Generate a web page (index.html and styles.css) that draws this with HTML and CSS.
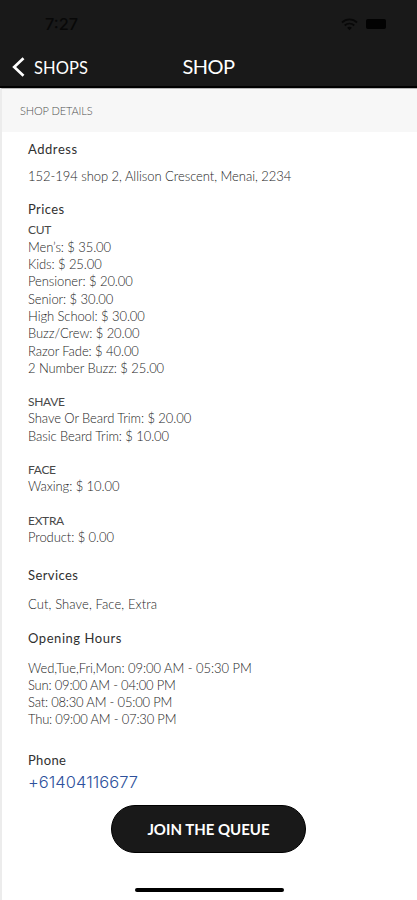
FILE: index.html
```html
<!DOCTYPE html>
<html lang="en">
<head>
<meta charset="utf-8">
<title>Shop</title>
<link rel="stylesheet" href="styles.css">
</head>
<body>
<div class="screen">
  <header class="top">
    <div class="status">
      <span class="time">7:27</span>
      <svg class="wifi" width="17" height="13" viewBox="0 0 17 13" fill="none" stroke="#080808" stroke-width="1.800"><path d="M1 4.500C5.200.3 11.800.3 16 4.500M3.700 7.500c2.800-2.600 6.800-2.600 9.600 0"/><path d="M8.500 12.300 6 9.700q2.500-2 5 0z" fill="#080808" stroke="none"/></svg>
      <span class="battery"></span>
    </div>
    <nav class="nav">
      <a class="back"><svg width="13" height="20" viewBox="0 0 13 20" fill="none" stroke="#fff" stroke-width="2.700"><path d="M11.500 1.200 2.200 10l9.300 8.800"/></svg><span>SHOPS</span></a>
      <h1>SHOP</h1>
    </nav>
  </header>
  <div class="section"><span>SHOP DETAILS</span></div>
  <div class="content">
    <main>
      <h2>Address</h2>
      <p class="address">152-194 shop 2, Allison Crescent, Menai, 2234</p>
      <h2 class="prices">Prices</h2>
      <div class="group">
        <h3>CUT</h3>
        <p>Men’s: $ 35.00</p>
        <p>Kids: $ 25.00</p>
        <p>Pensioner: $ 20.00</p>
        <p>Senior: $ 30.00</p>
        <p>High School: $ 30.00</p>
        <p>Buzz/Crew: $ 20.00</p>
        <p>Razor Fade: $ 40.00</p>
        <p>2 Number Buzz: $ 25.00</p>
      </div>
      <div class="group">
        <h3>SHAVE</h3>
        <p>Shave Or Beard Trim: $ 20.00</p>
        <p>Basic Beard Trim: $ 10.00</p>
      </div>
      <div class="group">
        <h3>FACE</h3>
        <p>Waxing: $ 10.00</p>
      </div>
      <div class="group">
        <h3>EXTRA</h3>
        <p>Product: $ 0.00</p>
      </div>
      <h2 class="services">Services</h2>
      <p class="list">Cut, Shave, Face, Extra</p>
      <h2 class="opening">Opening Hours</h2>
      <div class="hours">
        <p class="days">Wed,Tue,Fri,Mon: 09:00 AM - 05:30 PM</p>
        <p>Sun: 09:00 AM - 04:00 PM</p>
        <p>Sat: 08:30 AM - 05:00 PM</p>
        <p>Thu: 09:00 AM - 07:30 PM</p>
      </div>
      <h2 class="phone">Phone</h2>
      <a class="tel">+61404116677</a>
    </main>
    <button class="join">JOIN THE QUEUE</button>
    <div class="home"></div>
  </div>
</div>
</body>
</html>
```
FILE: styles.css
```css
* { box-sizing: border-box; margin: 0; padding: 0; }
body { background: #fff; font-family: Lato, "Liberation Sans", sans-serif; }
.screen { height: 900px; overflow: hidden; display: flex; flex-direction: column; }
.top { height: 88px; background: #191919; border-bottom: 2px solid #000; flex: none; }
.status { height: 48px; display: flex; align-items: center; padding-left: 45px; }
.time { width: 296px; font: 500 16.300px/20px Inter, sans-serif; color: #080808; }
.battery { width: 20px; height: 10px; margin-left: 8px; border-radius: 2px; background: #020202; }
.nav { height: 38px; display: grid; grid-template-columns: 1fr auto 1fr; align-items: center; color: #fff; }
.back { display: flex; align-items: center; gap: 9px; padding-left: 12px; font-size: 16.500px; line-height: 20px; letter-spacing: .1px; }
.back span { padding-top: 2px; }
.nav h1 { font-size: 20px; line-height: 24px; font-weight: 400; letter-spacing: -.5px; padding-bottom: 3px; }
.section { height: 44px; flex: none; background: #f7f7f7; border-top: 1px solid #b5b5b5; border-left: 2px solid #ececec; padding: 13px 0 0 18px; font-size: 11px; line-height: 18px; font-weight: 300; color: #505050; letter-spacing: -.1px; }
.content { flex: 1; display: flex; flex-direction: column; border-left: 2px solid #ececec; }
main { height: 668px; flex: none; padding: 7px 0 0 26px; font-size: 13px; line-height: 17.300px; font-weight: 300; color: #252525; letter-spacing: -.08px; }
h2 { font-size: 13px; line-height: 20px; font-weight: 400; letter-spacing: .55px; color: #303030; }
h3 { font-size: 12px; line-height: 17.300px; font-weight: 400; letter-spacing: -.3px; color: #484848; }
.address { padding-top: 9px; letter-spacing: -.05px; }
.prices { margin-top: 13.700px; letter-spacing: .4px; }
.group + .group { margin-top: 16px; }
.prices + .group { margin-top: 2.500px; }
.services { margin-top: 18.800px; letter-spacing: .4px; }
.list { margin-top: 11.200px; letter-spacing: .1px; }
.opening { margin-top: 14.500px; }
.hours { margin-top: 11.500px; letter-spacing: -.2px; }
.days { letter-spacing: -.05px; }
.phone { margin-top: 20.800px; letter-spacing: .35px; }
.tel { display: block; margin-top: 1.200px; font: 300 16.500px/22px Inter, sans-serif; color: #2e519c; letter-spacing: .05px; }
.join { flex: none; align-self: center; width: 195px; height: 48px; margin: 5px 0 0 -2px; border: 1px solid #000; border-radius: 24px; background: #191919; color: #fff; font: 700 15px/20px Lato, sans-serif; }
.home { flex: none; align-self: center; width: 149px; height: 4px; margin: 35px 0 0 -1px; border-radius: 2px; background: #000; }
```
